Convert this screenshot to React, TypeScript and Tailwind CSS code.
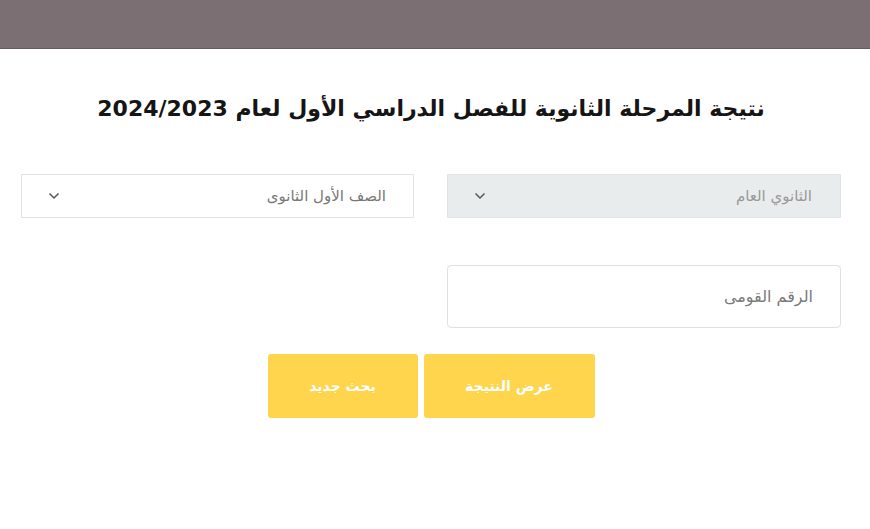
import React from "react";

const Chevron = () => (
  <svg width="12" height="8" viewBox="0 0 12 8" fill="none" stroke="#555" strokeWidth="1.5">
    <path d="M1.5 1.5 6 6l4.5-4.5" />
  </svg>
);

const App: React.FC = () => {
  return (
    <div
      className="w-[870px] h-[529px] bg-white overflow-hidden"
      style={{ fontFamily: '"DejaVu Sans", "Noto Sans", sans-serif' }}
    >
      {/* header strip */}
      <div className="h-[49px] bg-[#7b6f74] border-b border-[#665b60]" />

      <div dir="rtl" className="pr-[29px] pl-[21px]">
        <h1 className="mt-[44px] text-center text-[22px] leading-[32px] font-bold text-[#151515]">
          نتيجة المرحلة الثانوية للفصل الدراسي الأول لعام 2024/2023
        </h1>

        {/* selects */}
        <div className="mt-[49px] flex gap-[33px]">
          <div className="w-[394px] h-[44px] bg-[#e9eced] border border-[#e1e4e6] flex items-center justify-between pr-[28px] pl-[26px]">
            <span className="text-[15px] text-[#9a9a9a]">الثانوي العام</span>
            <Chevron />
          </div>
          <div className="w-[393px] h-[44px] bg-white border border-[#e3e3e3] flex items-center justify-between pr-[27px] pl-[26px]">
            <span className="text-[15px] text-[#777]">الصف الأول الثانوى</span>
            <Chevron />
          </div>
        </div>

        {/* national id */}
        <div className="mt-[47px] flex">
          <div className="w-[394px] h-[63px] bg-white border border-[#e0e0e0] rounded-[4px] flex items-center pr-[27px]">
            <span className="text-[16px] text-[#7a7a7a]">الرقم القومى</span>
          </div>
        </div>

        {/* buttons */}
        <div className="mt-[26px] flex justify-center gap-[6px]">
          <button className="w-[171px] h-[64px] rounded-[3px] bg-[#fed54d] text-white text-[14px] font-bold">
            عرض النتيجة
          </button>
          <button className="w-[150px] h-[64px] rounded-[3px] bg-[#fed54d] text-white text-[14px] font-bold">
            بحث جديد
          </button>
        </div>
      </div>
    </div>
  );
};

export default App;
